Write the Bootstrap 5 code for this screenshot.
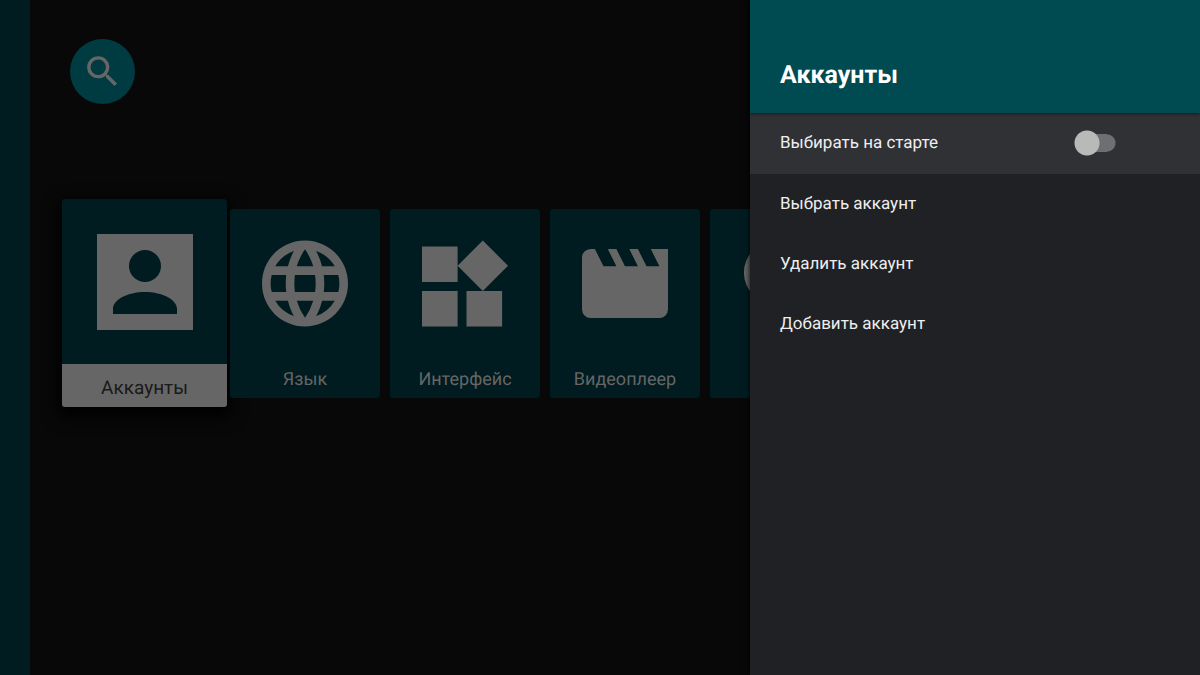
<!DOCTYPE html>
<html lang="ru">
<head>
<meta charset="utf-8">
<meta name="viewport" content="width=device-width, initial-scale=1">
<title>Аккаунты</title>
<link href="https://cdn.jsdelivr.net/npm/bootstrap@5.3.0/dist/css/bootstrap.min.css" rel="stylesheet">
<style>
  body { background: #080808; color: #fff; font-family: Roboto, "Noto Sans", sans-serif; text-rendering: geometricPrecision; }
  button { text-rendering: inherit; }
  .rail { width: 30px; background: #001c20; }
  .browse { min-width: 0; padding: 39px 0 0 40px; }
  .search-orb { width: 65px; height: 65px; background: #003b42; color: #666; }
  .search-orb svg { width: 41px; height: 41px; }
  .tiles { margin-top: 95px; gap: 10px; }
  .tile { width: 150px; background: #001c20; color: #666; border-radius: 3px; font-size: 18px; line-height: 36px; }
  .tile-art { height: 149px; }
  .tile-art svg { width: 86px; height: 87px; }
  .tile-name { padding-top: 4px; }
  .tile-focus { width: 165px; margin: 0 -7px 0 -8px; font-size: 19px; line-height: 39px; box-shadow: 0 6px 16px 4px #000; overflow: hidden; }
  .tile-focus .tile-art { height: 165px; }
  .tile-focus .tile-art svg { width: 96px; height: 96px; margin-top: 1px; }
  .tile-focus .tile-name { background: #666; color: #1a1a1a; }
  .side { width: 37.5%; background: #202125; box-shadow: 0 0 6px #000; }
  .side-head { height: 113px; padding: 0 30px 20px; background: #004a52; box-shadow: 0 1px 3px rgba(0,0,0,.5); z-index: 1; }
  .side-head h1 { font-size: 25px; line-height: 34px; }
  .side-row { height: 60px; padding: 0 83px 0 30px; color: #eee; font-size: 17px; line-height: 24px; }
  .side-row.current { box-sizing: content-box; border-bottom: 1px solid #303135; background: #303135; }
  .toggle { width: 43px; height: 26px; appearance: none; margin: 0; cursor: pointer;
    background: radial-gradient(circle at 13px 13px, #b9b9b9 12px, transparent 13px),
      linear-gradient(#6e6f72, #6e6f72) 13px 4px / 20px 18px no-repeat,
      radial-gradient(circle at 33px 13px, #6e6f72 8px, transparent 9px); }
  .toggle:checked { transform: scaleX(-1); }
</style>
</head>
<body>
<div class="d-flex min-vh-100 overflow-hidden">
  <div class="rail flex-shrink-0"></div>
  <main class="browse flex-grow-1 overflow-hidden">
    <button type="button" class="search-orb btn border-0 rounded-circle p-0 d-flex align-items-center justify-content-center" aria-label="Поиск">
      <svg viewBox="0 0 24 24" fill="currentColor"><path d="M15.5 14h-.79l-.28-.27A6.47 6.47 0 0 0 16 9.500 6.500 6.500 0 1 0 9.500 16c1.610 0 3.090-.59 4.230-1.570l.27.28v.79l5 4.990L20.490 19l-4.990-5zm-6 0a4.500 4.500 0 1 1 0-9 4.500 4.500 0 0 1 0 9z"/></svg>
    </button>
    <div class="tiles d-flex align-items-center">
      <button type="button" class="tile tile-focus border-0 p-0 flex-shrink-0">
        <span class="tile-art d-flex align-items-center justify-content-center"><svg viewBox="0 0 24 24" fill="currentColor" fill-rule="evenodd"><path d="M0 0h24v24H0zM12 12a4 4 0 1 0 0-8 4 4 0 0 0 0 8zm0 2.500c-4.420 0-8 2-8 4.200V20h16v-1.300c0-2.200-3.580-4.200-8-4.200z"/></svg></span>
        <span class="tile-name d-block">Аккаунты</span>
      </button>
      <button type="button" class="tile border-0 p-0 flex-shrink-0">
        <span class="tile-art d-flex align-items-center justify-content-center"><svg viewBox="2 2 20 20" fill="currentColor"><path d="M11.990 2C6.470 2 2 6.480 2 12s4.470 10 9.990 10C17.520 22 22 17.520 22 12S17.520 2 11.990 2zm6.930 6h-2.950a15.650 15.650 0 0 0-1.380-3.560A8.030 8.030 0 0 1 18.920 8zM12 4.040c.83 1.200 1.480 2.530 1.910 3.960h-3.820c.43-1.430 1.080-2.760 1.910-3.960zM4.260 14C4.100 13.360 4 12.690 4 12s.1-1.360.26-2h3.380a16.500 16.500 0 0 0 0 4H4.260zm.82 2h2.950c.32 1.250.78 2.450 1.380 3.560A7.990 7.990 0 0 1 5.080 16zm2.950-8H5.080a7.990 7.990 0 0 1 4.330-3.560A15.650 15.650 0 0 0 8.030 8zM12 19.960A14.100 14.100 0 0 1 10.090 16h3.820A14.100 14.100 0 0 1 12 19.960zM14.340 14H9.660a14.700 14.700 0 0 1 0-4h4.680a14.700 14.700 0 0 1 0 4zm.25 5.560c.6-1.110 1.060-2.310 1.380-3.560h2.950a8.030 8.030 0 0 1-4.330 3.560zM16.360 14a16.500 16.500 0 0 0 0-4h3.380c.16.64.26 1.310.26 2s-.1 1.360-.26 2h-3.380z"/></svg></span>
        <span class="tile-name d-block">Язык</span>
      </button>
      <button type="button" class="tile border-0 p-0 flex-shrink-0">
        <span class="tile-art d-flex align-items-center justify-content-center"><svg viewBox="3 1.680 19.320 19.320" fill="currentColor"><path d="M13 13v8h8v-8zM3 21h8v-8H3zM3 3v8h8V3zM16.660 1.680 11 7.340 16.660 13l5.660-5.660z"/></svg></span>
        <span class="tile-name d-block">Интерфейс</span>
      </button>
      <button type="button" class="tile border-0 p-0 flex-shrink-0">
        <span class="tile-art d-flex align-items-center justify-content-center"><svg viewBox="2 2 20 20" fill="currentColor"><path d="m18 4 2 4h-3l-2-4h-2l2 4h-3l-2-4H8l2 4H7L5 4H4a2 2 0 0 0-2 2v12a2 2 0 0 0 2 2h16a2 2 0 0 0 2-2V4z"/></svg></span>
        <span class="tile-name d-block">Видеоплеер</span>
      </button>
      <button type="button" class="tile border-0 p-0 flex-shrink-0" aria-label="Поиск">
        <span class="tile-art d-flex align-items-center justify-content-center"><svg viewBox="2.600 2.800 18 18" fill="currentColor"><path d="M15.500 14h-.79l-.28-.27A6.470 6.470 0 0 0 16 9.500 6.500 6.500 0 1 0 9.500 16c1.610 0 3.090-.59 4.230-1.570l.27.28v.79l5 4.990L20.490 19l-4.990-5zm-6 0a4.500 4.500 0 1 1 0-9 4.500 4.500 0 0 1 0 9z"/></svg></span>
        <span class="tile-name d-block">&nbsp;</span>
      </button>
    </div>
  </main>
  <aside class="side flex-shrink-0 position-relative">
    <header class="side-head d-flex align-items-end position-relative"><h1 class="m-0 fw-bold">Аккаунты</h1></header>
    <div class="side-row current d-flex align-items-center justify-content-between">
      <label for="pick-on-start">Выбирать на старте</label>
      <input type="checkbox" role="switch" class="toggle" id="pick-on-start">
    </div>
    <a href="#" class="side-row d-flex align-items-center text-decoration-none">Выбрать аккаунт</a>
    <a href="#" class="side-row d-flex align-items-center text-decoration-none">Удалить аккаунт</a>
    <a href="#" class="side-row d-flex align-items-center text-decoration-none">Добавить аккаунт</a>
  </aside>
</div>
<script src="https://cdn.jsdelivr.net/npm/bootstrap@5.3.0/dist/js/bootstrap.bundle.min.js"></script>
</body>
</html>
